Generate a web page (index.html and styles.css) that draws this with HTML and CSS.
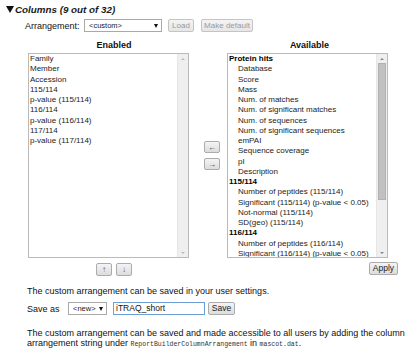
FILE: index.html
```html
<!DOCTYPE html>
<html lang="en">
<head>
    <meta charset="UTF-8">
    <title>Columns</title>
    <link rel="stylesheet" href="styles.css">
</head>
<body>
    <div class="title"><span class="tri"></span>Columns (9 out of 32)</div>

    <div class="arrange-row">
        <span class="label">Arrangement:</span>
        <div class="select sel-arrange"><span>&lt;custom&gt;</span><span class="caret"></span></div>
        <button class="btn btn-load" disabled>Load</button>
        <button class="btn btn-default" disabled>Make default</button>
    </div>

    <div class="columns">
        <div class="col col-left">
            <div class="col-head head-left">Enabled</div>
            <div class="listbox">
                <div class="items">
                    <div class="item">Family</div>
                    <div class="item">Member</div>
                    <div class="item">Accession</div>
                    <div class="item">115/114</div>
                    <div class="item">p-value (115/114)</div>
                    <div class="item">116/114</div>
                    <div class="item">p-value (116/114)</div>
                    <div class="item">117/114</div>
                    <div class="item">p-value (117/114)</div>
                </div>
                <div class="vscroll off">
                    <div class="sarrow up"></div>
                    <div class="track"></div>
                    <div class="sarrow down"></div>
                </div>
            </div>
            <div class="updown">
                <button class="btn btn-small">&#8593;</button>
                <button class="btn btn-small">&#8595;</button>
            </div>
        </div>

        <div class="mid">
            <button class="btn btn-move">&#8592;</button>
            <button class="btn btn-move">&#8594;</button>
        </div>

        <div class="col col-right">
            <div class="col-head head-right">Available</div>
            <div class="listbox">
                <div class="items">
                    <div class="item group">Protein hits</div>
                    <div class="item sub">Database</div>
                    <div class="item sub">Score</div>
                    <div class="item sub">Mass</div>
                    <div class="item sub">Num. of matches</div>
                    <div class="item sub">Num. of significant matches</div>
                    <div class="item sub">Num. of sequences</div>
                    <div class="item sub">Num. of significant sequences</div>
                    <div class="item sub">emPAI</div>
                    <div class="item sub">Sequence coverage</div>
                    <div class="item sub">pI</div>
                    <div class="item sub">Description</div>
                    <div class="item group">115/114</div>
                    <div class="item sub">Number of peptides (115/114)</div>
                    <div class="item sub">Significant (115/114) (p-value &lt; 0.05)</div>
                    <div class="item sub">Not-normal (115/114)</div>
                    <div class="item sub">SD(geo) (115/114)</div>
                    <div class="item group">116/114</div>
                    <div class="item sub">Number of peptides (116/114)</div>
                    <div class="item sub">Significant (116/114) (p-value &lt; 0.05)</div>
                </div>
                <div class="vscroll">
                    <div class="sarrow up"></div>
                    <div class="track"><div class="thumb"></div></div>
                    <div class="sarrow down"></div>
                </div>
            </div>
            <div class="apply-row">
                <button class="btn btn-apply">Apply</button>
            </div>
        </div>
    </div>

    <p class="note">The custom arrangement can be saved in your user settings.</p>

    <div class="save-row">
        <span class="label">Save as</span>
        <div class="select sel-new"><span>&lt;new&gt;</span><span class="caret"></span></div>
        <div class="textbox">iTRAQ_short</div>
        <button class="btn btn-save">Save</button>
    </div>

    <p class="note bottom">The custom arrangement can be saved and made accessible to all users by adding the column arrangement string under <code>ReportBuilderColumnArrangement</code> in <code>mascot.dat</code>.</p>
</body>
</html>
```

FILE: styles.css
```css
body {
    margin: 0;
    font-family: "Liberation Sans", Arial, sans-serif;
    font-size: 9px;
    color: #111;
    background: #fff;
    width: 415px;
    height: 356px;
    overflow: hidden;
}

.title {
    display: flex;
    align-items: center;
    padding: 3px 0 0 6px;
    height: 12px;
    font-size: 9.8px;
    font-weight: bold;
    font-style: italic;
    color: #1a1a1a;
}
.tri {
    width: 0;
    height: 0;
    border-left: 4.5px solid transparent;
    border-right: 4.5px solid transparent;
    border-top: 7px solid #111;
    margin-right: 1px;
}

.arrange-row {
    display: flex;
    align-items: center;
    margin-top: 4px;
    padding-left: 25px;
    height: 13px;
}
.arrange-row .label {
    width: 59px;
}

.select {
    box-sizing: border-box;
    height: 13px;
    border: 1px solid #a9a9a9;
    background: #fff;
    display: flex;
    align-items: center;
    justify-content: space-between;
    padding: 0 3px 0 4px;
    font-size: 7.5px;
    color: #222;
}
.caret {
    width: 0;
    height: 0;
    border-left: 2.5px solid transparent;
    border-right: 2.5px solid transparent;
    border-top: 4px solid #111;
}
.sel-arrange {
    width: 78px;
}

.btn {
    box-sizing: border-box;
    height: 13px;
    padding: 0;
    border: 1px solid #acacac;
    border-radius: 2px;
    background: linear-gradient(#f4f4f4, #dcdcdc);
    font-family: "Liberation Sans", Arial, sans-serif;
    font-size: 8px;
    color: #222;
    line-height: 11px;
}
.btn:disabled {
    color: #9a9a9a;
    border-color: #c4c4c4;
    background: linear-gradient(#f4f4f4, #e6e6e6);
}
.btn-load {
    width: 26px;
    margin-left: 6px;
}
.btn-default {
    width: 52px;
    margin-left: 7px;
}

.columns {
    display: flex;
    padding-left: 28px;
    margin-top: 9px;
}
.col {
    display: flex;
    flex-direction: column;
}
.col-head {
    height: 12px;
    font-weight: bold;
    text-align: center;
    line-height: 9px;
}
.head-left {
    padding-left: 11px;
}
.head-right {
    width: 161px;
    padding-left: 2px;
}

.listbox {
    box-sizing: border-box;
    width: 161px;
    height: 205px;
    border: 1px solid #bababa;
    display: flex;
    background: #fff;
}
.items {
    flex: 1;
    overflow: hidden;
    padding: 0 0 0 1px;
    font-size: 8px;
    line-height: 10.25px;
    color: #1c1c1c;
}
.item {
    white-space: nowrap;
}
.item.group {
    font-weight: bold;
    color: #000;
}
.item.sub {
    padding-left: 9px;
}

.vscroll {
    width: 10px;
    display: flex;
    flex-direction: column;
    background: #efefef;
    border-left: 1px solid #e6e6e6;
}
.sarrow {
    height: 9px;
    display: flex;
    align-items: center;
    justify-content: center;
}
.sarrow::after {
    content: "";
    width: 0;
    height: 0;
    border-left: 2px solid transparent;
    border-right: 2px solid transparent;
}
.sarrow.up::after {
    border-bottom: 2px solid #888;
}
.sarrow.down::after {
    border-top: 2px solid #888;
}
.vscroll.off .sarrow::after {
    border-top-color: #bbb;
    border-bottom-color: #bbb;
}
.track {
    flex: 1;
    padding: 0 1px;
}
.thumb {
    box-sizing: border-box;
    height: 137px;
    background: #c1c1c1;
    border: 1px solid #b1b1b1;
}

.updown {
    display: flex;
    gap: 4px;
    padding-left: 68px;
    margin-top: 5px;
}
.btn-small {
    width: 16px;
    font-size: 8px;
    color: #556;
}

.mid {
    width: 38px;
    display: flex;
    flex-direction: column;
    gap: 5px;
    padding: 100px 0 0 15px;
    box-sizing: border-box;
}
.btn-move {
    width: 16px;
    height: 12px;
    font-size: 8px;
    color: #333;
}

.apply-row {
    display: flex;
    justify-content: flex-end;
    width: 171px;
    margin-top: 4px;
}
.btn-apply {
    width: 29px;
    font-size: 8.5px;
}

.note {
    margin: 0;
    padding: 10px 0 0 27px;
    line-height: 11px;
}

.save-row {
    display: flex;
    align-items: center;
    height: 13px;
    margin-top: 5px;
    padding-left: 27px;
}
.save-row .label {
    width: 41px;
}
.sel-new {
    width: 39px;
}
.textbox {
    box-sizing: border-box;
    width: 92px;
    height: 13px;
    margin-left: 6px;
    border: 1px solid #6b9fd6;
    padding-left: 2px;
    font-size: 8.5px;
    line-height: 11px;
    color: #111;
}
.btn-save {
    width: 27px;
    margin-left: 3px;
    font-size: 8.5px;
}

.note.bottom {
    padding-top: 13px;
    line-height: 10px;
    padding-right: 4px;
}
code {
    display: inline-block;
    font-family: "Liberation Mono", "Courier New", monospace;
    font-size: 6.5px;
    line-height: 8px;
    color: #333;
}
```
